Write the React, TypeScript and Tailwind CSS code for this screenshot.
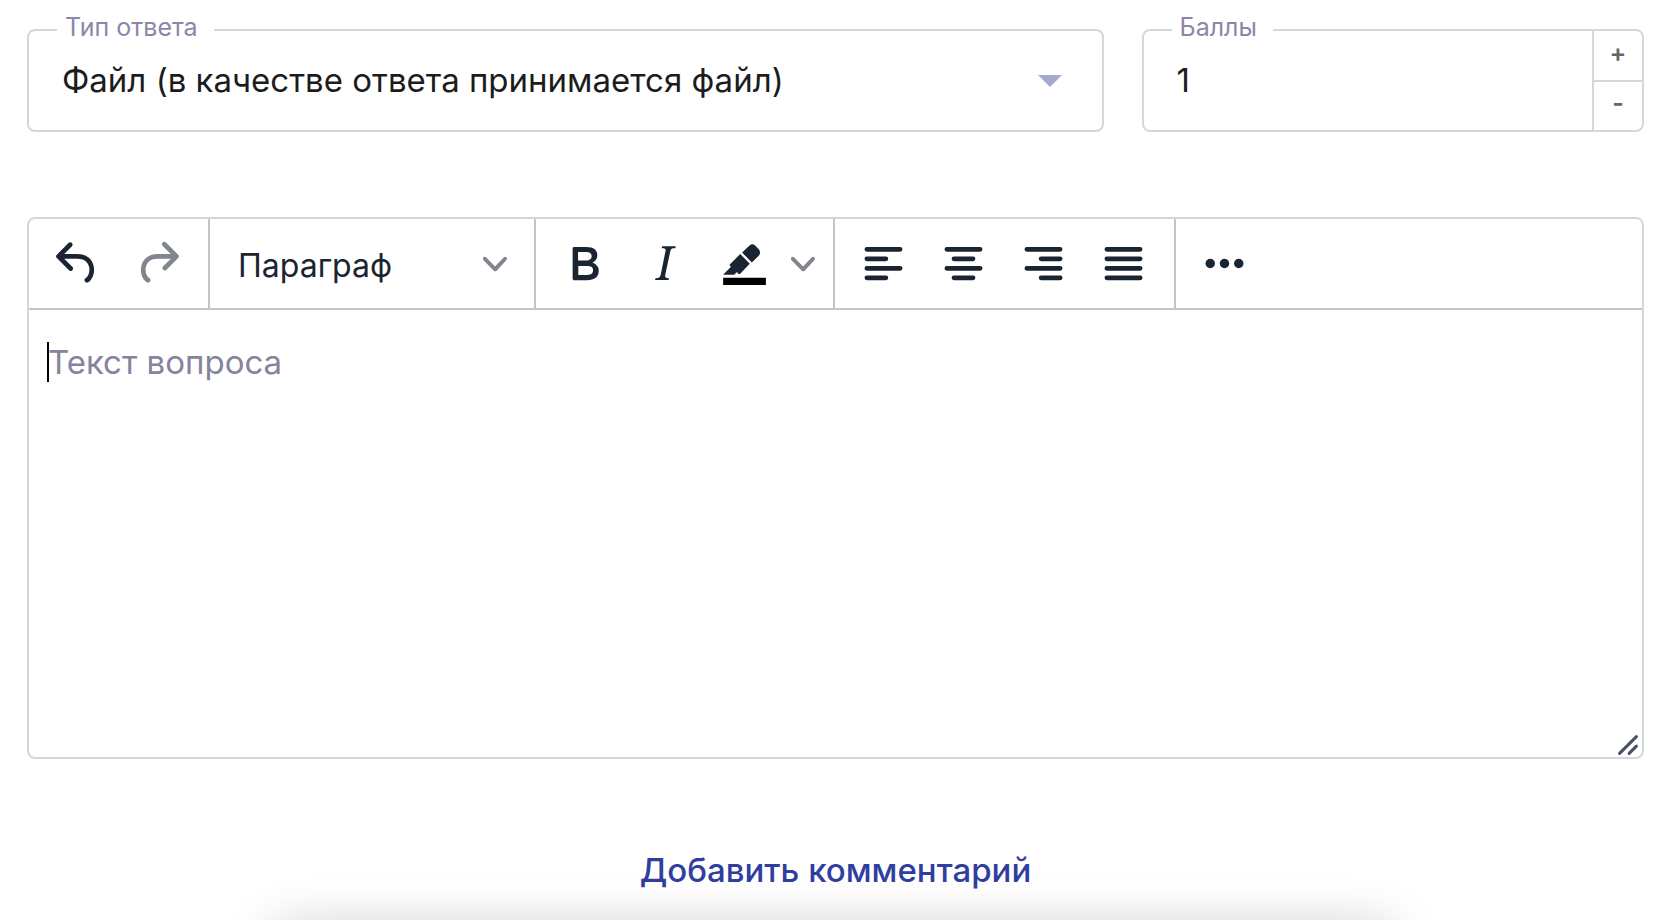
import type { ReactNode } from "react";

const ICON = "h-[57px] w-[57px] shrink-0 fill-current";

function ToolButton({ label, disabled, children }: { label: string; disabled?: boolean; children: ReactNode }) {
  return (
    <button
      type="button"
      aria-label={label}
      disabled={disabled}
      className="flex w-20 items-center justify-center self-stretch text-[#1b2532] disabled:text-[#81868e]"
    >
      <svg viewBox="0 0 24 24" className={ICON} aria-hidden="true">
        {children}
      </svg>
    </button>
  );
}

function Group({ children }: { children: ReactNode }) {
  return <div className="flex items-center border-r-2 border-[#c4c4c4] pr-[11px] pl-2">{children}</div>;
}

function Chevron() {
  return (
    <svg viewBox="0 0 10 10" className="h-6 w-6 shrink-0 fill-[#81868e]" aria-hidden="true">
      <path d="M8.7 2.2c.3-.3.8-.3 1 0 .4.4.4.9 0 1.2L5.7 7.8c-.3.3-.9.3-1.2 0L.2 3.4a.8.8 0 0 1 0-1.2c.3-.3.8-.3 1.1 0L5 6l3.7-3.8Z" />
    </svg>
  );
}

function Lines({ d }: { d: string }) {
  return <path d={d} fill="none" stroke="currentColor" strokeWidth="2" strokeLinecap="round" />;
}

export default function App() {
  return (
    <div className="flex min-h-screen flex-col bg-white font-[Inter,'Noto_Sans',sans-serif] text-[#1c1c1c]">
      <main className="flex flex-col pt-[29px] pr-[22px] pl-[27px]">
        <div className="flex gap-[38px]">
          <div className="relative flex h-[103px] min-w-0 flex-[1078] items-center rounded-lg border-2 border-[#d1d9de]">
            <label
              htmlFor="answer-type"
              className="absolute -top-5 left-7 bg-white pr-4 pl-2 text-[25px] leading-8 text-[#8d86a5]"
            >
              Тип ответа
            </label>
            <select
              id="answer-type"
              className="h-full w-full appearance-none rounded-lg bg-transparent pr-20 pl-[33px] text-[33px] outline-none"
            >
              <option>Файл (в качестве ответа принимается файл)</option>
            </select>
            <svg
              viewBox="0 0 24 12"
              className="pointer-events-none absolute right-10 h-3 w-6 fill-[#a5aaca]"
              aria-hidden="true"
            >
              <path d="M0 0h24L12 12z" />
            </svg>
          </div>

          <div className="relative flex h-[103px] min-w-0 flex-[501] rounded-lg border-2 border-[#d1d9de]">
            <label
              htmlFor="points"
              className="absolute -top-5 left-7 bg-white pr-4 pl-2 text-[25px] leading-8 text-[#8d86a5]"
            >
              Баллы
            </label>
            <input
              id="points"
              type="text"
              inputMode="numeric"
              defaultValue="1"
              className="min-w-0 flex-1 rounded-lg bg-transparent pl-[33px] text-[33px] outline-none"
            />
            <div className="flex w-[50px] flex-col border-l-2 border-[#d1d9de] text-[25px] font-semibold text-[#666666]">
              <button type="button" className="flex flex-1 items-center justify-center border-b-2 border-[#d1d9de] pb-1">
                +
              </button>
              <button type="button" className="flex flex-1 items-center justify-center pb-1">
                -
              </button>
            </div>
          </div>
        </div>

        <div className="mt-[85px] flex flex-col rounded-lg border-2 border-[#d1d9de]">
          <div className="flex h-[91px] border-b-2 border-[#c4c4c4]">
            <Group>
              <ToolButton label="Отменить">
                <path d="M6.4 8H12c3.7 0 6.2 2 6.8 5.1.6 2.7-.4 5.6-2.3 6.8a1 1 0 0 1-1-1.8c1.1-.6 1.8-2.7 1.4-4.6-.5-2.1-2.1-3.5-4.9-3.5H6.4l3.3 3.3a1 1 0 1 1-1.4 1.4l-5-5a1 1 0 0 1 0-1.4l5-5a1 1 0 0 1 1.4 1.4L6.4 8Z" />
              </ToolButton>
              <ToolButton label="Повторить" disabled>
                <path d="M17.6 10H12c-2.8 0-4.4 1.4-4.9 3.5-.4 2 .3 4 1.4 4.6a1 1 0 1 1-1 1.8c-2-1.2-2.9-4.1-2.3-6.8.6-3 3-5.1 6.8-5.1h5.6l-3.3-3.3a1 1 0 1 1 1.4-1.4l5 5a1 1 0 0 1 0 1.4l-5 5a1 1 0 0 1-1.4-1.4l3.3-3.3Z" />
              </ToolButton>
            </Group>
            <Group>
              <button
                type="button"
                className="flex w-[305px] items-center justify-between self-stretch pr-4 pl-5 text-[32px] text-[#1b2532]"
              >
                <span className="pt-1">Параграф</span>
                <Chevron />
              </button>
            </Group>
            <Group>
              <ToolButton label="Полужирный">
                <path
                  fillRule="evenodd"
                  d="M7.8 19c-.3 0-.5 0-.6-.2l-.2-.5V5.7c0-.2 0-.4.2-.5l.6-.2h5c1.5 0 2.7.3 3.5 1 .7.6 1.1 1.4 1.1 2.5a3 3 0 0 1-.6 1.9c-.4.6-1 1-1.6 1.2.4.1.9.3 1.3.6s.8.7 1 1.2c.4.4.5 1 .5 1.6 0 1.3-.4 2.3-1.3 3-.8.7-2.1 1-3.8 1H7.8Zm5-8.3c.6 0 1.2-.1 1.6-.5.4-.3.6-.7.6-1.3 0-1.1-.8-1.7-2.3-1.7H9.3v3.5h3.4Zm.5 6c.7 0 1.3-.1 1.7-.4.4-.4.6-.9.6-1.5s-.2-1-.7-1.4c-.4-.3-1-.4-2-.4H9.4v3.8h4Z"
                />
              </ToolButton>
              <ToolButton label="Курсив">
                <path d="m16.7 4.7-.1.9h-.3c-.6 0-1 0-1.4.3-.3.3-.4.6-.5 1.1l-2.1 9.8v.6c0 .5.4.8 1.4.8h.2l-.2.8H8l.2-.8h.2c1.1 0 1.8-.5 2-1.5l2-9.8.1-.5c0-.6-.4-.8-1.4-.8h-.3l.2-.9h5.8Z" />
              </ToolButton>
              <ToolButton label="Цвет фона">
                <path d="M3 18h18v3H3z" fill="#000000" />
                <path
                  fillRule="evenodd"
                  d="M7.7 16.7H3l3.3-3.3-.7-.8L10.2 8l4 4.1-4 4.2c-.2.2-.6.2-.8 0l-.6-.7-1.1 1.1Zm5-7.5L11 7.4l3-2.9a2 2 0 0 1 2.6 0L18 6c.7.7.7 2 0 2.7l-2.9 2.9-1.8-1.8-.5-.6"
                />
              </ToolButton>
              <button
                type="button"
                aria-label="Выбрать цвет фона"
                className="flex w-[38px] items-center justify-center self-stretch"
              >
                <Chevron />
              </button>
            </Group>
            <Group>
              <ToolButton label="По левому краю">
                <Lines d="M5 6h14M5 10h8M5 14h14M5 18h8" />
              </ToolButton>
              <ToolButton label="По центру">
                <Lines d="M5 6h14M8 10h8M5 14h14M8 18h8" />
              </ToolButton>
              <ToolButton label="По правому краю">
                <Lines d="M5 6h14M11 10h8M5 14h14M11 18h8" />
              </ToolButton>
              <ToolButton label="По ширине">
                <Lines d="M5 6h14M5 10h14M5 14h14M5 18h14" />
              </ToolButton>
            </Group>
            <div className="flex items-center pl-2">
              <ToolButton label="Ещё">
                <circle cx="6" cy="12" r="2" />
                <circle cx="12" cy="12" r="2" />
                <circle cx="18" cy="12" r="2" />
              </ToolButton>
            </div>
          </div>

          <div className="relative flex">
            <textarea
              aria-label="Текст вопроса"
              placeholder="Текст вопроса"
              className="h-[447px] w-full resize-none rounded-b-lg bg-transparent px-[19px] py-8 text-[33px] leading-10 outline-none placeholder:text-[#87839d]"
            />
            <span className="pointer-events-none absolute top-8 left-[18px] h-10 w-0.5 bg-black" />
            <svg
              viewBox="0 0 10 10"
              className="pointer-events-none absolute right-0.5 bottom-0 h-6 w-6"
              aria-hidden="true"
            >
              <path
                d="M1.5 8.5l7-7M5.5 8.5l3-3"
                fill="none"
                stroke="#4b5360"
                strokeWidth="1.3"
                strokeLinecap="round"
              />
            </svg>
          </div>
        </div>

        <button
          type="button"
          className="mt-[87px] self-center text-[33px] leading-[48px] font-medium text-[#303f9f]"
        >
          Добавить комментарий
        </button>
      </main>

      <div className="pointer-events-none -mt-6 flex h-14 justify-center overflow-hidden pt-14" aria-hidden="true">
        <div className="h-14 w-[68%] shrink-0 rounded-[40px] shadow-[0_0_52px_rgba(0,0,0,0.2)]" />
      </div>
    </div>
  );
}
